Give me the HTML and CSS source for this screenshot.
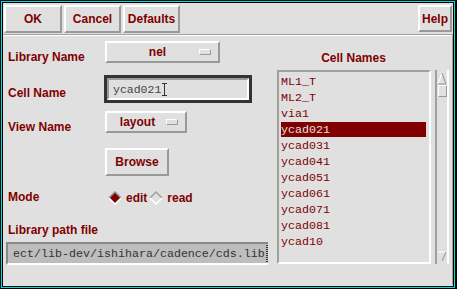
FILE: index.html
```html
<!DOCTYPE html>
<html lang="en">
<head>
    <meta charset="UTF-8">
    <title>Open File</title>
    <link rel="stylesheet" href="styles.css">
</head>
<body>
<div class="window">
    <div class="panel">
        <div class="toolbar">
            <button class="btn btn-ok">OK</button>
            <button class="btn btn-cancel">Cancel</button>
            <button class="btn btn-defaults">Defaults</button>
            <span class="spacer"></span>
            <button class="btn btn-help">Help</button>
        </div>

        <div class="main">
            <div class="form">
                <div class="row row-lib">
                    <label class="label">Library Name</label>
                    <div class="menu menu-lib"><span class="menu-text">nel</span><span class="menu-mark"></span></div>
                </div>

                <div class="row row-cell">
                    <label class="label">Cell Name</label>
                    <div class="entry"><span class="entry-in">ycad021<span class="caret"></span></span></div>
                </div>

                <div class="row row-view">
                    <label class="label">View Name</label>
                    <div class="menu menu-view"><span class="menu-text">layout</span><span class="menu-mark"></span></div>
                </div>

                <div class="row row-browse">
                    <span class="label"></span>
                    <button class="btn btn-browse">Browse</button>
                </div>

                <div class="row row-mode">
                    <label class="label">Mode</label>
                    <div class="radios">
                        <svg class="diamond" width="14" height="14" viewBox="0 0 14 14">
                            <polygon points="7,1 13,7 7,13 1,7" fill="#800000"/>
                            <polyline points="1,7 7,1 13,7" fill="none" stroke="#8c8c8c" stroke-width="1.5"/>
                            <polyline points="1,7 7,13 13,7" fill="none" stroke="#ffffff" stroke-width="1.5"/>
                        </svg>
                        <span class="radio-text">edit</span>
                        <svg class="diamond" width="14" height="14" viewBox="0 0 14 14">
                            <polyline points="1,7 7,1 13,7" fill="none" stroke="#a0a0a0" stroke-width="1.5"/>
                            <polyline points="1,7 7,13 13,7" fill="none" stroke="#ffffff" stroke-width="1.5"/>
                        </svg>
                        <span class="radio-text">read</span>
                    </div>
                </div>

                <div class="label label-path">Library path file</div>
                <div class="path">ect/lib-dev/ishihara/cadence/cds.lib<span class="path-end"></span></div>
            </div>

            <div class="cells">
                <div class="cells-title">Cell Names</div>
                <div class="cells-box">
                    <ul class="list">
                        <li>ML1_T</li>
                        <li>ML2_T</li>
                        <li>via1</li>
                        <li class="selected">ycad021</li>
                        <li>ycad031</li>
                        <li>ycad041</li>
                        <li>ycad051</li>
                        <li>ycad061</li>
                        <li>ycad071</li>
                        <li>ycad081</li>
                        <li>ycad10</li>
                    </ul>
                    <div class="scroll">
                        <svg width="10" height="13" viewBox="0 0 10 13">
                            <polyline points="1,12 5,1 9,12" fill="none" stroke="#ffffff" stroke-width="1.2"/>
                            <line x1="1" y1="12" x2="9" y2="12" stroke="#9a9a9a" stroke-width="1.2"/>
                            <line x1="5" y1="1" x2="9" y2="12" stroke="#9a9a9a" stroke-width="1.2"/>
                        </svg>
                        <div class="slider"></div>
                        <span class="spacer"></span>
                        <svg width="10" height="11" viewBox="0 0 10 11">
                            <polyline points="1,1 9,1 5,10" fill="none" stroke="#ffffff" stroke-width="1.2"/>
                            <line x1="5" y1="10" x2="9" y2="1" stroke="#9a9a9a" stroke-width="1.2"/>
                        </svg>
                    </div>
                </div>
            </div>
        </div>
    </div>
</div>
</body>
</html>
```

FILE: styles.css
```css
* {
    box-sizing: border-box;
}

body {
    margin: 0;
    background: #e0e0e0;
    font-family: "Liberation Sans", Arial, sans-serif;
    font-size: 12px;
    color: #800000;
}

.window {
    width: 457px;
    height: 289px;
    border: 1px solid #000;
    border-right-width: 2px;
    padding: 1px;
    background: #00e0e0;
}

.panel {
    height: 100%;
    border: 1px solid #000;
    background: #e0e0e0;
}

.toolbar {
    display: flex;
    gap: 2px;
    height: 32px;
    padding: 2px 1px 0 1px;
    border-bottom: 1px solid #a0a0a0;
    box-shadow: 0 1px 0 #fff;
}

.spacer {
    flex: 1;
}

.btn {
    font-family: "Liberation Sans", Arial, sans-serif;
    font-size: 12px;
    font-weight: bold;
    color: #800000;
    background: #e0e0e0;
    border: 2px solid;
    border-color: #fff #999 #999 #fff;
    padding: 0;
    margin: 0;
}

.btn-ok {
    width: 58px;
    height: 28px;
}

.btn-cancel, .btn-defaults {
    width: 57px;
    height: 28px;
}

.btn-help {
    width: 34px;
    height: 27px;
}

.main {
    display: flex;
    border-right: 1px solid #a0a0a0;
    height: 250px;
}

.form {
    width: 274px;
    padding-left: 5px;
}

.row {
    display: flex;
    align-items: flex-start;
}

.label {
    display: block;
    width: 97px;
    font-weight: bold;
    line-height: 14px;
    flex-shrink: 0;
}

.row-lib {
    margin-top: 6px;
    height: 22px;
}

.row-lib .label, .row-view .label {
    padding-top: 9px;
}

.row-cell {
    margin-top: 12px;
    height: 28px;
}

.row-cell .label {
    padding-top: 11px;
}

.row-view {
    margin-top: 8px;
    height: 22px;
}

.row-browse {
    margin-top: 15px;
}

.row-mode {
    margin-top: 14px;
}

.menu {
    display: flex;
    align-items: center;
    height: 22px;
    border: 2px solid;
    border-color: #fff #999 #999 #fff;
    font-weight: bold;
}

.menu-lib {
    width: 115px;
}

.menu-view {
    width: 82px;
}

.menu-text {
    flex: 1;
    text-align: center;
}

.menu-lib .menu-text {
    padding-left: 9px;
}

.menu-view .menu-text {
    padding-left: 2px;
}

.menu-mark {
    width: 12px;
    height: 6px;
    border: 1px solid;
    border-color: #fff #999 #999 #fff;
    margin-right: 7px;
}

.entry {
    width: 148px;
    height: 28px;
    margin-left: -1px;
    border: 3px solid #333;
}

.entry-in {
    display: flex;
    align-items: center;
    height: 100%;
    padding-left: 4px;
    border: 2px solid;
    border-color: #999 #fff #fff #999;
    font-family: "Liberation Mono", "Courier New", monospace;
    font-size: 11.5px;
    color: #444;
}

.caret {
    width: 5px;
    height: 13px;
    margin-left: 1px;
    border-top: 1px solid #333;
    border-bottom: 1px solid #333;
    background: linear-gradient(#333, #333) center / 1px 100% no-repeat;
}

.btn-browse {
    width: 64px;
    height: 28px;
}

.radios {
    display: flex;
    align-items: center;
    height: 16px;
    margin-left: 3px;
    font-weight: bold;
}

.radio-text {
    margin: 0 2px 0 4px;
}

.label-path {
    width: auto;
    margin-top: 17px;
}

.path {
    display: flex;
    align-items: center;
    width: 262px;
    height: 23px;
    margin: 5px 0 0 -2px;
    padding-left: 5px;
    border-top: 2px solid #888;
    border-left: 2px solid #888;
    border-bottom: 2px solid #fff;
    background: #bdbdbd;
    font-family: "Liberation Mono", "Courier New", monospace;
    font-size: 11.67px;
    color: #333;
    white-space: nowrap;
    overflow: hidden;
}

.path-end {
    width: 3px;
    height: 17px;
    margin-left: 1px;
    border-left: 1px dotted #333;
    border-right: 1px dotted #333;
}

.cells {
    flex: 1;
    padding-top: 16px;
}

.cells-title {
    font-weight: bold;
    line-height: 14px;
    text-align: center;
    padding-right: 22px;
}

.cells-box {
    display: flex;
    gap: 4px;
    height: 194px;
    margin-top: 5px;
}

.list {
    list-style: none;
    margin: 0;
    width: 154px;
    padding: 2px 3px 0 2px;
    border: 2px solid;
    border-color: #a0a0a0 #fff #fff #a0a0a0;
    font-family: "Liberation Mono", "Courier New", monospace;
    font-size: 11.67px;
    overflow: hidden;
}

.list li {
    height: 15px;
    line-height: 14px;
    padding-top: 1px;
    margin-bottom: 1px;
}

.list .selected {
    background: #800000;
    color: #e0e0e0;
}

.scroll {
    display: flex;
    flex-direction: column;
    align-items: center;
    width: 14px;
    padding: 2px 0 2px 0;
    border-left: 2px solid #a0a0a0;
    border-right: 2px solid #fff;
}

.slider {
    width: 9px;
    height: 12px;
    border: 1px solid;
    border-color: #fff #999 #999 #fff;
}
```
